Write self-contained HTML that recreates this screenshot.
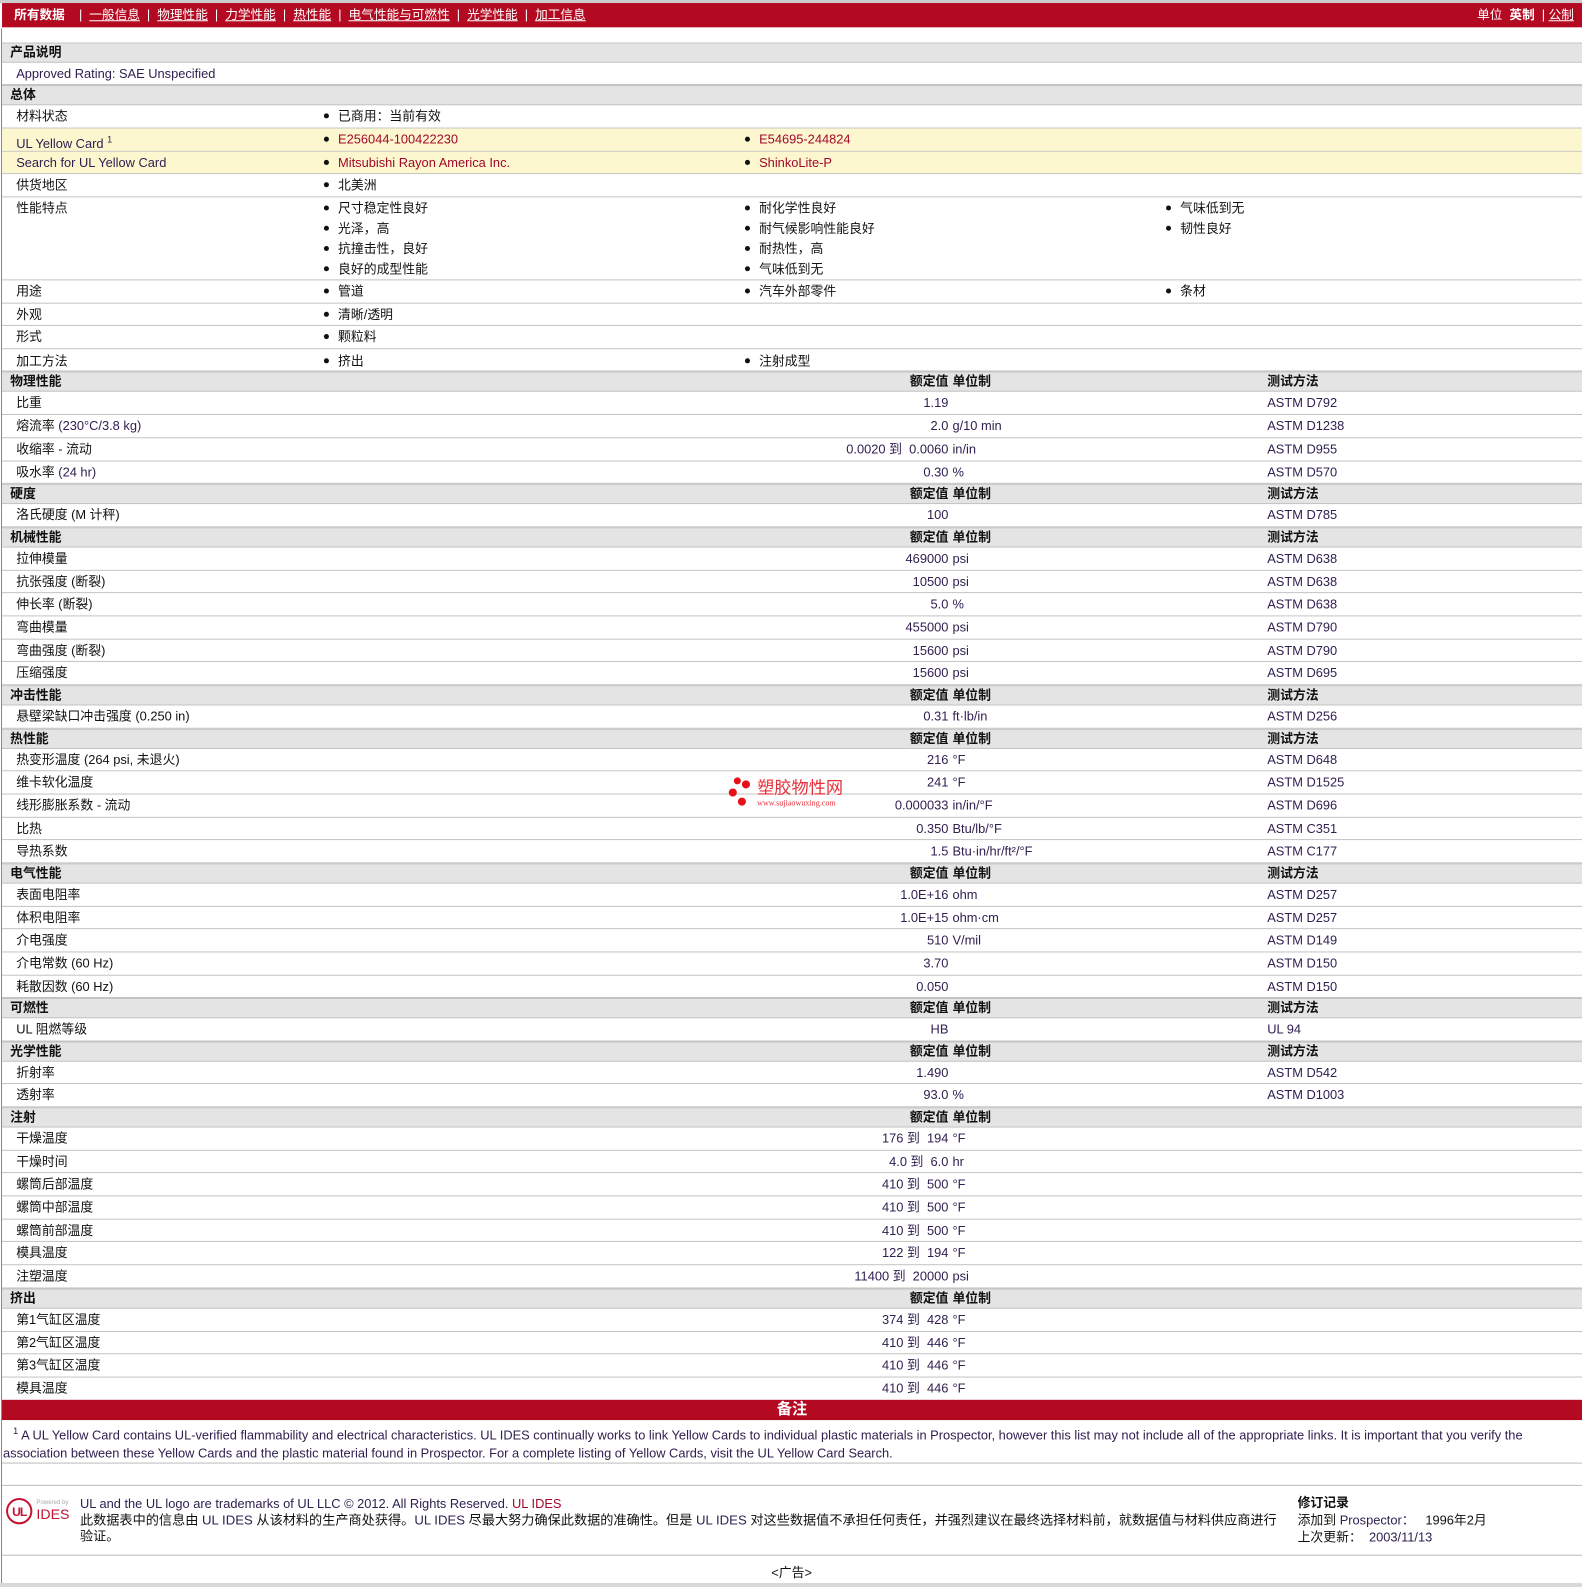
<!DOCTYPE html>
<html><head><meta charset="utf-8">
<style>
*{margin:0;padding:0;box-sizing:border-box}
body{width:1582px;height:1587px;background:#fff;position:relative;overflow:hidden;font-family:"Liberation Sans","Noto Sans CJK SC",sans-serif;font-size:12.7px;color:#111}
#w{position:absolute;left:0;top:0;width:1563px;height:1568px;transform:scale(1.01216);transform-origin:0 0}
.r{position:absolute;left:2px;width:1561px;border-bottom:1px solid #c4c4c4}
.r span{position:absolute;white-space:nowrap}
.h{background:#e4e4e4;font-weight:bold;border-top:1px solid #c4c4c4}
.y{background:#fdf7d0}
.l{left:14px}
.h .l{left:8px}
.v{right:626px;text-align:right;color:#302050}
.u{left:939px;color:#302050}
.m{left:1250px;color:#302050}
.b1{left:318px}.b2{left:734px}.b3{left:1150px}
.b1::before,.b2::before,.b3::before{content:"";display:inline-block;width:5px;height:5px;border-radius:50%;background:#111;margin-right:9px;vertical-align:middle;position:relative;top:-1px}
.lk{color:#a0082a}
.vl{position:absolute;left:1px;top:28px;width:1px;height:1540px;background:#888}
</style></head><body><div id="w">
<div style="position:absolute;left:0;top:0;width:1563px;height:3px;background:#ccc"></div>
<div style="position:absolute;left:2px;top:3px;width:1561px;height:24px;background:#b30a22;color:#fff;line-height:24px;font-size:12.5px">
<span style="position:absolute;left:12px;font-weight:bold">所有数据</span>
<span style="position:absolute;left:76px">|&nbsp;&nbsp;<u>一般信息</u>&nbsp;&nbsp;|&nbsp;&nbsp;<u>物理性能</u>&nbsp;&nbsp;|&nbsp;&nbsp;<u>力学性能</u>&nbsp;&nbsp;|&nbsp;&nbsp;<u>热性能</u>&nbsp;&nbsp;|&nbsp;&nbsp;<u>电气性能与可燃性</u>&nbsp;&nbsp;|&nbsp;&nbsp;<u>光学性能</u>&nbsp;&nbsp;|&nbsp;&nbsp;<u>加工信息</u></span>
<span style="position:absolute;right:8px">单位&nbsp;&nbsp;<b>英制</b>&nbsp;&nbsp;|&nbsp;<u>公制</u></span>
</div>
<div class="vl"></div>

<div class="r h" style="top:42px;height:20px;line-height:19px"><span class="l">产品说明</span></div>
<div class="r" style="top:62px;height:22px;line-height:22px"><span class="l" style="color:#302050">Approved Rating: SAE Unspecified</span></div>
<div class="r h" style="top:84px;height:20px;line-height:19px"><span class="l">总体</span></div>
<div class="r" style="top:104px;height:23px;line-height:23px"><span class="l">材料状态</span><span class="b1">已商用：当前有效</span></div>
<div class="r y" style="top:127px;height:23px;line-height:23px"><span class="l" style="color:#302050">UL Yellow Card <sup style="font-size:9px">1</sup></span><span class="b1 lk">E256044-100422230</span><span class="b2 lk">E54695-244824</span></div>
<div class="r y" style="top:150px;height:22px;line-height:22px"><span class="l" style="color:#302050">Search for UL Yellow Card</span><span class="b1 lk">Mitsubishi Rayon America Inc.</span><span class="b2 lk">ShinkoLite-P</span></div>
<div class="r" style="top:172px;height:23px;line-height:23px"><span class="l">供货地区</span><span class="b1">北美洲</span></div>
<div class="r" style="top:195px;height:82px;line-height:20px"><span class="l" style="top:1px">性能特点</span>
<span class="b1" style="top:1px">尺寸稳定性良好</span><span class="b1" style="top:21px">光泽，高</span><span class="b1" style="top:41px">抗撞击性，良好</span><span class="b1" style="top:61px">良好的成型性能</span>
<span class="b2" style="top:1px">耐化学性良好</span><span class="b2" style="top:21px">耐气候影响性能良好</span><span class="b2" style="top:41px">耐热性，高</span><span class="b2" style="top:61px">气味低到无</span>
<span class="b3" style="top:1px">气味低到无</span><span class="b3" style="top:21px">韧性良好</span></div>
<div class="r" style="top:277px;height:23px;line-height:23px"><span class="l">用途</span><span class="b1">管道</span><span class="b2">汽车外部零件</span><span class="b3">条材</span></div>
<div class="r" style="top:300px;height:22px;line-height:22px"><span class="l">外观</span><span class="b1">清晰/透明</span></div>
<div class="r" style="top:322px;height:23px;line-height:23px"><span class="l">形式</span><span class="b1">颗粒料</span></div>
<div class="r" style="top:345px;height:22px;line-height:24px"><span class="l">加工方法</span><span class="b1">挤出</span><span class="b2">注射成型</span></div>

<div class="r h" style="top:367px;height:20px;line-height:19px"><span class="l">物理性能</span><span class="v" style="color:#111">额定值</span><span class="u" style="color:#111">单位制</span><span class="m" style="color:#111">测试方法</span></div>
<div class="r" style="top:387px;height:23px;line-height:23px"><span class="l">比重</span><span class="v">1.19</span><span class="m">ASTM D792</span></div>
<div class="r" style="top:410px;height:23px;line-height:23px"><span class="l">熔流率 <span style="position:static;color:#302050">(230°C/3.8 kg)</span></span><span class="v">2.0</span><span class="u">g/10 min</span><span class="m">ASTM D1238</span></div>
<div class="r" style="top:433px;height:23px;line-height:23px"><span class="l">收缩率 - 流动</span><span class="v">0.0020 到&nbsp; 0.0060</span><span class="u">in/in</span><span class="m">ASTM D955</span></div>
<div class="r" style="top:456px;height:22px;line-height:22px"><span class="l">吸水率 <span style="position:static;color:#302050">(24 hr)</span></span><span class="v">0.30</span><span class="u">%</span><span class="m">ASTM D570</span></div>

<div class="r h" style="top:478px;height:20px;line-height:19px"><span class="l">硬度</span><span class="v" style="color:#111">额定值</span><span class="u" style="color:#111">单位制</span><span class="m" style="color:#111">测试方法</span></div>
<div class="r" style="top:498px;height:23px;line-height:23px"><span class="l">洛氏硬度 (M 计秤)</span><span class="v">100</span><span class="m">ASTM D785</span></div>

<div class="r h" style="top:521px;height:20px;line-height:19px"><span class="l">机械性能</span><span class="v" style="color:#111">额定值</span><span class="u" style="color:#111">单位制</span><span class="m" style="color:#111">测试方法</span></div>
<div class="r" style="top:541px;height:23px;line-height:23px"><span class="l">拉伸模量</span><span class="v">469000</span><span class="u">psi</span><span class="m">ASTM D638</span></div>
<div class="r" style="top:564px;height:22px;line-height:22px"><span class="l">抗张强度 (断裂)</span><span class="v">10500</span><span class="u">psi</span><span class="m">ASTM D638</span></div>
<div class="r" style="top:586px;height:23px;line-height:23px"><span class="l">伸长率 (断裂)</span><span class="v">5.0</span><span class="u">%</span><span class="m">ASTM D638</span></div>
<div class="r" style="top:609px;height:23px;line-height:23px"><span class="l">弯曲模量</span><span class="v">455000</span><span class="u">psi</span><span class="m">ASTM D790</span></div>
<div class="r" style="top:632px;height:22px;line-height:22px"><span class="l">弯曲强度 (断裂)</span><span class="v">15600</span><span class="u">psi</span><span class="m">ASTM D790</span></div>
<div class="r" style="top:654px;height:23px;line-height:23px"><span class="l">压缩强度</span><span class="v">15600</span><span class="u">psi</span><span class="m">ASTM D695</span></div>

<div class="r h" style="top:677px;height:20px;line-height:19px"><span class="l">冲击性能</span><span class="v" style="color:#111">额定值</span><span class="u" style="color:#111">单位制</span><span class="m" style="color:#111">测试方法</span></div>
<div class="r" style="top:697px;height:23px;line-height:23px"><span class="l">悬壁梁缺口冲击强度 (0.250 in)</span><span class="v">0.31</span><span class="u">ft·lb/in</span><span class="m">ASTM D256</span></div>

<div class="r h" style="top:720px;height:20px;line-height:19px"><span class="l">热性能</span><span class="v" style="color:#111">额定值</span><span class="u" style="color:#111">单位制</span><span class="m" style="color:#111">测试方法</span></div>
<div class="r" style="top:740px;height:22px;line-height:22px"><span class="l">热变形温度 (264 psi, 未退火)</span><span class="v">216</span><span class="u">°F</span><span class="m">ASTM D648</span></div>
<div class="r" style="top:762px;height:23px;line-height:23px"><span class="l">维卡软化温度</span><span class="v">241</span><span class="u">°F</span><span class="m">ASTM D1525</span></div>
<div class="r" style="top:785px;height:23px;line-height:23px"><span class="l">线形膨胀系数 - 流动</span><span class="v">0.000033</span><span class="u">in/in/°F</span><span class="m">ASTM D696</span></div>
<div class="r" style="top:808px;height:22px;line-height:22px"><span class="l">比热</span><span class="v">0.350</span><span class="u">Btu/lb/°F</span><span class="m">ASTM C351</span></div>
<div class="r" style="top:830px;height:23px;line-height:23px"><span class="l">导热系数</span><span class="v">1.5</span><span class="u">Btu·in/hr/ft²/°F</span><span class="m">ASTM C177</span></div>

<div class="r h" style="top:853px;height:20px;line-height:19px"><span class="l">电气性能</span><span class="v" style="color:#111">额定值</span><span class="u" style="color:#111">单位制</span><span class="m" style="color:#111">测试方法</span></div>
<div class="r" style="top:873px;height:23px;line-height:23px"><span class="l">表面电阻率</span><span class="v">1.0E+16</span><span class="u">ohm</span><span class="m">ASTM D257</span></div>
<div class="r" style="top:896px;height:22px;line-height:22px"><span class="l">体积电阻率</span><span class="v">1.0E+15</span><span class="u">ohm·cm</span><span class="m">ASTM D257</span></div>
<div class="r" style="top:918px;height:23px;line-height:23px"><span class="l">介电强度</span><span class="v">510</span><span class="u">V/mil</span><span class="m">ASTM D149</span></div>
<div class="r" style="top:941px;height:23px;line-height:23px"><span class="l">介电常数 (60 Hz)</span><span class="v">3.70</span><span class="m">ASTM D150</span></div>
<div class="r" style="top:964px;height:22px;line-height:22px"><span class="l">耗散因数 (60 Hz)</span><span class="v">0.050</span><span class="m">ASTM D150</span></div>

<div class="r h" style="top:986px;height:20px;line-height:19px"><span class="l">可燃性</span><span class="v" style="color:#111">额定值</span><span class="u" style="color:#111">单位制</span><span class="m" style="color:#111">测试方法</span></div>
<div class="r" style="top:1006px;height:23px;line-height:23px"><span class="l">UL 阻燃等级</span><span class="v">HB</span><span class="m">UL 94</span></div>

<div class="r h" style="top:1029px;height:20px;line-height:19px"><span class="l">光学性能</span><span class="v" style="color:#111">额定值</span><span class="u" style="color:#111">单位制</span><span class="m" style="color:#111">测试方法</span></div>
<div class="r" style="top:1049px;height:22px;line-height:22px"><span class="l">折射率</span><span class="v">1.490</span><span class="m">ASTM D542</span></div>
<div class="r" style="top:1071px;height:23px;line-height:23px"><span class="l">透射率</span><span class="v">93.0</span><span class="u">%</span><span class="m">ASTM D1003</span></div>

<div class="r h" style="top:1094px;height:20px;line-height:19px"><span class="l">注射</span><span class="v" style="color:#111">额定值</span><span class="u" style="color:#111">单位制</span></div>
<div class="r" style="top:1114px;height:23px;line-height:23px"><span class="l">干燥温度</span><span class="v">176 到&nbsp; 194</span><span class="u">°F</span></div>
<div class="r" style="top:1137px;height:22px;line-height:22px"><span class="l">干燥时间</span><span class="v">4.0 到&nbsp; 6.0</span><span class="u">hr</span></div>
<div class="r" style="top:1159px;height:23px;line-height:23px"><span class="l">螺筒后部温度</span><span class="v">410 到&nbsp; 500</span><span class="u">°F</span></div>
<div class="r" style="top:1182px;height:23px;line-height:23px"><span class="l">螺筒中部温度</span><span class="v">410 到&nbsp; 500</span><span class="u">°F</span></div>
<div class="r" style="top:1205px;height:22px;line-height:22px"><span class="l">螺筒前部温度</span><span class="v">410 到&nbsp; 500</span><span class="u">°F</span></div>
<div class="r" style="top:1227px;height:23px;line-height:23px"><span class="l">模具温度</span><span class="v">122 到&nbsp; 194</span><span class="u">°F</span></div>
<div class="r" style="top:1250px;height:23px;line-height:23px"><span class="l">注塑温度</span><span class="v">11400 到&nbsp; 20000</span><span class="u">psi</span></div>

<div class="r h" style="top:1273px;height:20px;line-height:19px"><span class="l">挤出</span><span class="v" style="color:#111">额定值</span><span class="u" style="color:#111">单位制</span></div>
<div class="r" style="top:1293px;height:23px;line-height:23px"><span class="l">第1气缸区温度</span><span class="v">374 到&nbsp; 428</span><span class="u">°F</span></div>
<div class="r" style="top:1316px;height:22px;line-height:22px"><span class="l">第2气缸区温度</span><span class="v">410 到&nbsp; 446</span><span class="u">°F</span></div>
<div class="r" style="top:1338px;height:23px;line-height:23px"><span class="l">第3气缸区温度</span><span class="v">410 到&nbsp; 446</span><span class="u">°F</span></div>
<div class="r" style="top:1361px;height:22px;line-height:22px;border-bottom:none"><span class="l">模具温度</span><span class="v">410 到&nbsp; 446</span><span class="u">°F</span></div>

<div style="position:absolute;left:2px;top:1383px;width:1561px;height:20px;background:#b30a22;color:#fff;text-align:center;font-size:15px;line-height:20px;font-weight:bold">备注</div>
<div style="position:absolute;left:3px;top:1405px;width:1556px;line-height:18px;color:#302050"><sup style="font-size:9px;margin-left:10px">1</sup> A UL Yellow Card contains UL-verified flammability and electrical characteristics. UL IDES continually works to link Yellow Cards to individual plastic materials in Prospector, however this list may not include all of the appropriate links. It is important that you verify the association between these Yellow Cards and the plastic material found in Prospector. For a complete listing of Yellow Cards, visit the UL Yellow Card Search.</div>
<div style="position:absolute;left:2px;top:1445px;width:1561px;border-top:1px solid #bbb"></div>
<div style="position:absolute;left:2px;top:1467px;width:1561px;border-top:1px solid #bbb"></div>

<svg style="position:absolute;left:5px;top:1478px" width="66" height="30" viewBox="0 0 66 30">
<circle cx="14" cy="15" r="12" fill="none" stroke="#c4122f" stroke-width="2"/>
<text x="14" y="20" text-anchor="middle" font-family="Liberation Sans" font-size="12" font-weight="bold" fill="#c4122f" letter-spacing="-1">UL</text>
<text x="31" y="8" font-family="Liberation Sans" font-size="6" fill="#aaa">Powered by</text>
<text x="31" y="23" font-family="Liberation Sans" font-size="14" fill="#c4122f">IDES</text>
</svg>
<div style="position:absolute;left:79px;top:1478px;width:1186px;line-height:16px;font-size:13px"><span style="color:#302050;font-size:12.7px">UL and the UL logo are trademarks of UL LLC © 2012. All Rights Reserved. </span><span class="lk" style="font-size:12.7px">UL IDES</span><br>此数据表中的信息由 <span style="color:#302050">UL IDES</span> 从该材料的生产商处获得。<span style="color:#302050">UL IDES</span> 尽最大努力确保此数据的准确性。但是 <span style="color:#302050">UL IDES</span> 对这些数据值不承担任何责任，并强烈建议在最终选择材料前，就数据值与材料供应商进行验证。</div>
<div style="position:absolute;left:1282px;top:1477px;line-height:17px"><b>修订记录</b><br>添加到 <span style="color:#302050">Prospector：</span>&nbsp;&nbsp; 1996年2月<br>上次更新：&nbsp; <span style="color:#302050">2003/11/13</span></div>
<div style="position:absolute;left:2px;top:1536px;width:1561px;border-top:1px solid #bbb"></div>
<div style="position:absolute;left:762px;top:1546px;line-height:16px">&lt;广告&gt;</div>
<div style="position:absolute;left:0;top:1564px;width:1563px;height:4px;background:#d8d8d8"></div>

<div style="position:absolute;left:719px;top:766px;width:130px;height:36px">
<div style="position:absolute;left:6px;top:2px;width:7px;height:7px;border-radius:50%;background:#e61019"></div>
<div style="position:absolute;left:14px;top:5px;width:8px;height:8px;border-radius:50%;background:#e61019"></div>
<div style="position:absolute;left:1px;top:13px;width:8px;height:8px;border-radius:50%;background:#e61019"></div>
<div style="position:absolute;left:10px;top:22px;width:8px;height:8px;border-radius:50%;background:#e61019"></div>
<div style="position:absolute;left:29px;top:4px;font-size:17px;line-height:18px;color:#e8303a;white-space:nowrap">塑胶物性网</div>
<div style="position:absolute;left:29px;top:23px;font-size:8px;line-height:9px;color:#e8303a;font-family:'Liberation Serif',serif;white-space:nowrap">www.sujiaowuxing.com</div>
</div>
</div></body></html>
